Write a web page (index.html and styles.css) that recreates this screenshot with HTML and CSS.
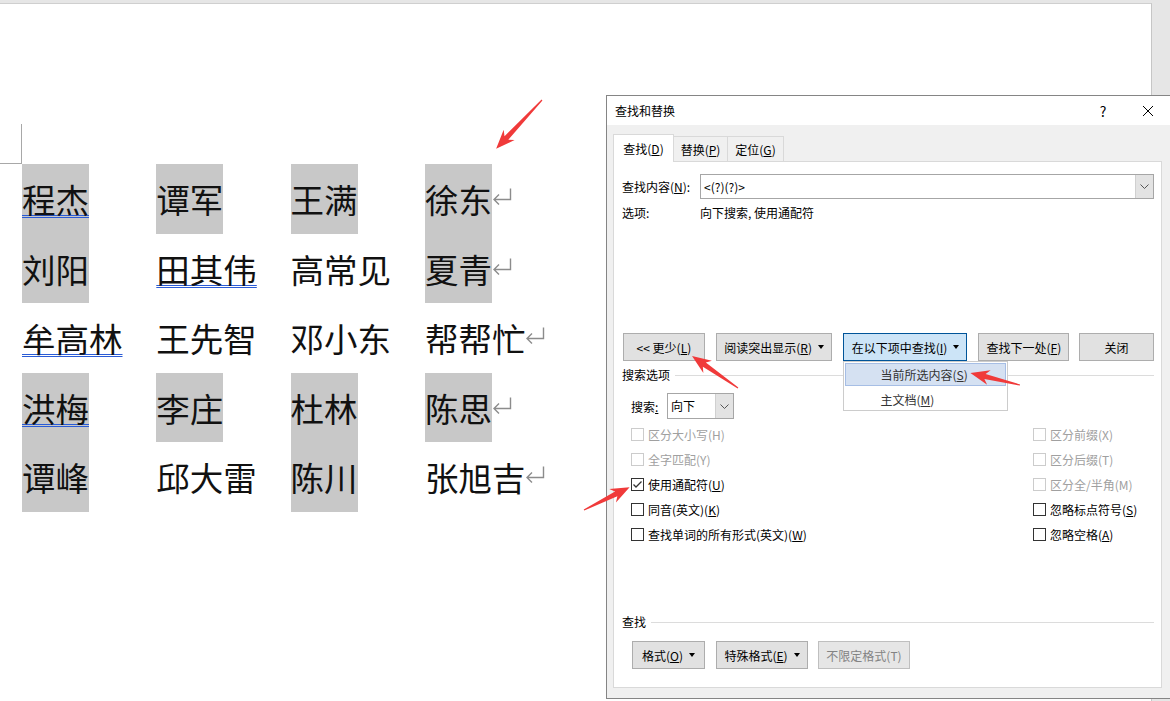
FILE: index.html
```html
<!DOCTYPE html>
<html>
<head>
  <meta charset="UTF-8">
  <title>查找和替换</title>
  <link rel="stylesheet" href="styles.css">
</head>
<body>
  <div class="page">
    <div class="corner"></div>
    <div class="names">
      <div class="row">
        <span class="cell"><span class="nm hl ul">程杰</span></span>
        <span class="cell"><span class="nm hl">谭军</span></span>
        <span class="cell"><span class="nm hl">王满</span></span>
        <span class="cell"><span class="nm hl">徐东</span><svg class="ret" viewBox="0 0 20 17"><path d="M18.5 0.5V11.5H2.5M7 6.5L2 11.5L7 16.5"/></svg></span>
      </div>
      <div class="row">
        <span class="cell"><span class="nm hl">刘阳</span></span>
        <span class="cell"><span class="nm ul">田其伟</span></span>
        <span class="cell"><span class="nm">高常见</span></span>
        <span class="cell"><span class="nm hl">夏青</span><svg class="ret" viewBox="0 0 20 17"><path d="M18.5 0.5V11.5H2.5M7 6.5L2 11.5L7 16.5"/></svg></span>
      </div>
      <div class="row">
        <span class="cell"><span class="nm ul">牟高林</span></span>
        <span class="cell"><span class="nm">王先智</span></span>
        <span class="cell"><span class="nm">邓小东</span></span>
        <span class="cell"><span class="nm">帮帮忙</span><svg class="ret" viewBox="0 0 20 17"><path d="M18.5 0.5V11.5H2.5M7 6.5L2 11.5L7 16.5"/></svg></span>
      </div>
      <div class="row">
        <span class="cell"><span class="nm hl ul">洪梅</span></span>
        <span class="cell"><span class="nm hl">李庄</span></span>
        <span class="cell"><span class="nm hl">杜林</span></span>
        <span class="cell"><span class="nm hl">陈思</span><svg class="ret" viewBox="0 0 20 17"><path d="M18.5 0.5V11.5H2.5M7 6.5L2 11.5L7 16.5"/></svg></span>
      </div>
      <div class="row">
        <span class="cell"><span class="nm hl">谭峰</span></span>
        <span class="cell"><span class="nm">邱大雷</span></span>
        <span class="cell"><span class="nm hl">陈川</span></span>
        <span class="cell"><span class="nm">张旭吉</span><svg class="ret" viewBox="0 0 20 17"><path d="M18.5 0.5V11.5H2.5M7 6.5L2 11.5L7 16.5"/></svg></span>
      </div>
    </div>
  </div>

  <!-- 查找和替换 对话框 -->
  <div class="dialog">
    <div class="titlebar">
      <span class="title">查找和替换</span>
      <span class="tb-help">?</span>
      <span class="tb-close"><svg width="10" height="10" viewBox="0 0 10 10"><path d="M0 0L10 10M10 0L0 10"/></svg></span>
    </div>
    <div class="dbody">
      <div class="tabs">
        <div class="tab active">查找(<u>D</u>)</div>
        <div class="tab t2">替换(<u>P</u>)</div>
        <div class="tab t3">定位(<u>G</u>)</div>
      </div>
      <div class="panel">
        <div class="find-row">
          <span class="lbl">查找内容(<u>N</u>):</span>
          <div class="combo">
            <span class="combo-text">&lt;(?)(?)&gt;</span>
            <span class="combo-btn"><svg width="9" height="5" viewBox="0 0 9 5"><path d="M0.5 0.5L4.5 4.5L8.5 0.5"/></svg></span>
          </div>
        </div>
        <div class="opts-row">
          <span class="lbl">选项:</span>
          <span>向下搜索, 使用通配符</span>
        </div>

        <div class="btn-row">
          <div class="btn w-less">&lt;&lt; 更少(<u>L</u>)</div>
          <div class="btn w-read">阅读突出显示(<u>R</u>)<i class="caret"></i></div>
          <div class="menu-wrap">
            <div class="btn w-in active-btn">在以下项中查找(<u>I</u>)<i class="caret"></i></div>
            <div class="menu">
              <div class="menu-item sel">当前所选内容(<u>S</u>)</div>
              <div class="menu-item">主文档(<u>M</u>)</div>
            </div>
          </div>
          <div class="btn w-next">查找下一处(<u>F</u>)</div>
          <div class="btn w-close">关闭</div>
        </div>

        <div class="group">搜索选项</div>
        <div class="dir-row">
          <span class="dir-lbl">搜索<u>:</u></span>
          <div class="select">
            <span class="combo-text">向下</span>
            <span class="combo-btn"><svg width="9" height="5" viewBox="0 0 9 5"><path d="M0.5 0.5L4.5 4.5L8.5 0.5"/></svg></span>
          </div>
        </div>

        <div class="checks">
          <div class="chk off"><span class="box"></span>区分大小写(H)</div>
          <div class="chk off"><span class="box"></span>区分前缀(X)</div>
          <div class="chk off"><span class="box"></span>全字匹配(Y)</div>
          <div class="chk off"><span class="box"></span>区分后缀(T)</div>
          <div class="chk"><span class="box"><svg width="11" height="11" viewBox="0 0 11 11"><path d="M1.5 5.5L4 8L9.5 2.5"/></svg></span>使用通配符(<u>U</u>)</div>
          <div class="chk off"><span class="box"></span>区分全/半角(M)</div>
          <div class="chk"><span class="box"></span>同音(英文)(<u>K</u>)</div>
          <div class="chk"><span class="box"></span>忽略标点符号(<u>S</u>)</div>
          <div class="chk"><span class="box"></span>查找单词的所有形式(英文)(<u>W</u>)</div>
          <div class="chk"><span class="box"></span>忽略空格(<u>A</u>)</div>
        </div>

        <div class="group bottom">查找</div>
        <div class="fmt-row">
          <div class="btn w-fmt">格式(<u>O</u>)<i class="caret"></i></div>
          <div class="btn w-spec">特殊格式(<u>E</u>)<i class="caret"></i></div>
          <div class="btn w-none disabled">不限定格式(T)</div>
        </div>
      </div>
    </div>
  </div>

  <!-- 标注箭头 -->
  <svg class="marks" width="1170" height="701" viewBox="0 0 1170 701">
    <g transform="translate(542 100) rotate(133.2)"><polygon points="0,-0.6 52,-2.6 48,-7.5 67,0 48,7.5 52,2.6 0,0.6"/></g>
    <g transform="translate(738 388) rotate(-145.2)"><polygon points="0,-0.6 41,-2.6 37,-7.5 56,0 37,7.5 41,2.6 0,0.6"/></g>
    <g transform="translate(1020 385) rotate(-166.5)"><polygon points="0,-0.6 36,-2.6 32,-7.5 51,0 32,7.5 36,2.6 0,0.6"/></g>
    <g transform="translate(584 510) rotate(-26.6)"><polygon points="0,-0.6 36,-2.6 32,-7.5 51,0 32,7.5 36,2.6 0,0.6"/></g>
  </svg>
</body>
</html>
```

FILE: styles.css
```css
* {
  box-sizing: border-box;
}
body {
  margin: 0;
  width: 1170px;
  height: 701px;
  overflow: hidden;
  position: relative;
  background-color: #e6e6e6;
  font-family: "Noto Sans CJK SC", "Noto Sans", sans-serif;
}

/* документ */
.page {
  width: 1152px;
  height: 698px;
  margin-top: 3px;
  background-color: #fff;
  border-top: 1px solid #cfcfcf;
  border-right: 1px solid #c6c6c6;
}
.corner {
  width: 22px;
  height: 40px;
  margin-top: 120px;
  border-right: 1px solid #a8a8a8;
  border-bottom: 1px solid #a8a8a8;
}
.names {
  padding-left: 22px;
  font-size: 33.5px;
  color: #111;
}
.row {
  display: flex;
  height: 69.6px;
}
.cell {
  display: flex;
  width: 134.3px;
  flex-shrink: 0;
}
.nm {
  display: block;
  height: 69.6px;
  line-height: 69.6px;
  white-space: nowrap;
}
.hl {
  background-color: #c8c8c8;
}
.ul {
  text-decoration: underline double #2a5bd6;
  text-decoration-thickness: 1px;
  text-underline-offset: 2px;
}
.ret {
  width: 20px;
  height: 17px;
  margin-top: 24px;
  flex-shrink: 0;
  fill: none;
  stroke: #8c8c8c;
  stroke-width: 1.4;
}

/* диалог */
.dialog {
  position: absolute;
  left: 606px;
  top: 95px;
  width: 566px;
  height: 604px;
  border: 1px solid #858585;
  background-color: #f0f0f0;
  font-size: 12px;
  color: #000;
}
.titlebar {
  display: flex;
  align-items: center;
  height: 29px;
  padding-left: 8px;
  background-color: #fff;
}
.title {
  flex: 1;
}
.tb-help {
  width: 44px;
  text-align: center;
  font-size: 14px;
}
.tb-close {
  width: 46px;
  display: flex;
  justify-content: center;
}
.tb-close svg {
  stroke: #000;
  stroke-width: 1;
}
.dbody {
  padding: 9px 0 0 6px;
}
.tabs {
  display: flex;
  align-items: flex-end;
  height: 27px;
}
.tab {
  display: flex;
  align-items: center;
  justify-content: center;
  height: 25px;
  margin-left: -1px;
  border: 1px solid #d9d9d9;
  border-bottom: none;
  background-color: #f0f0f0;
}
.tab.active {
  position: relative;
  z-index: 1;
  width: 61px;
  height: 28px;
  margin-left: 0;
  margin-bottom: -1px;
  background-color: #fff;
}
.tab.t2 {
  width: 55px;
}
.tab.t3 {
  width: 57px;
}
.panel {
  width: 549px;
  height: 527px;
  padding: 12px 7px 0 8px;
  border: 1px solid #d9d9d9;
  background-color: #fff;
}
.find-row {
  display: flex;
  align-items: center;
  height: 25px;
}
.lbl {
  width: 78px;
  flex-shrink: 0;
}
.combo {
  flex: 1;
  display: flex;
  height: 25px;
  border: 1px solid #a6a6a6;
}
.combo-text {
  flex: 1;
  padding-left: 3px;
  line-height: 23px;
}
.combo-btn {
  width: 18px;
  display: flex;
  align-items: center;
  justify-content: center;
  background-color: #e3e3e3;
  border-left: 1px solid #d0d0d0;
}
.combo-btn svg {
  fill: none;
  stroke: #555;
  stroke-width: 1;
}
.opts-row {
  display: flex;
  margin-top: 6px;
  line-height: 16px;
}
.btn-row {
  display: flex;
  margin-top: 112px;
  margin-left: 1px;
}
.btn {
  display: flex;
  align-items: center;
  justify-content: center;
  height: 28px;
  border: 1px solid #adadad;
  background-color: #e1e1e1;
  white-space: nowrap;
}
.caret {
  width: 0;
  height: 0;
  margin-left: 6px;
  border-left: 3.5px solid transparent;
  border-right: 3.5px solid transparent;
  border-top: 4px solid #000;
}
.w-less { width: 82px; }
.w-read { width: 117px; margin-left: 11px; }
.menu-wrap { position: relative; margin-left: 11px; }
.w-in { width: 124px; }
.w-next { width: 91px; margin-left: 11px; }
.w-close { width: 75px; margin-left: 10px; }
.active-btn {
  background-color: #cce4f7;
  border-color: #005499;
}
.menu {
  position: absolute;
  left: 0;
  top: 28px;
  z-index: 2;
  width: 165px;
  height: 50px;
  padding: 1px;
  border: 1px solid #cccccc;
  background-color: #fff;
  color: #333;
}
.menu-item {
  height: 23px;
  line-height: 21px;
  padding-left: 34px;
  border: 1px solid transparent;
}
.menu-item + .menu-item {
  margin-top: 1px;
  line-height: 24px;
}
.menu-item.sel {
  background-color: #d5e1f2;
  border-color: #a6bee5;
}
.group {
  display: flex;
  align-items: center;
  margin-top: 6px;
  line-height: 16px;
}
.group::after {
  content: "";
  flex: 1;
  height: 1px;
  margin-left: 5px;
  background-color: #dcdcdc;
}
.group.bottom {
  margin-top: 67px;
}
.dir-row {
  display: flex;
  align-items: center;
  height: 26px;
  margin-top: 10px;
  padding-left: 9px;
}
.dir-lbl {
  width: 36px;
}
.select {
  display: flex;
  width: 67px;
  height: 26px;
  border: 1px solid #a6a6a6;
}
.checks {
  display: grid;
  grid-template-columns: 402px 1fr;
  grid-auto-rows: 25px;
  margin-top: 3px;
  padding-left: 9px;
}
.chk {
  display: flex;
  align-items: center;
  white-space: nowrap;
}
.box {
  display: flex;
  align-items: center;
  justify-content: center;
  width: 13px;
  height: 13px;
  margin-right: 4px;
  border: 1px solid #333;
  background-color: #fff;
}
.box svg {
  fill: none;
  stroke: #333;
  stroke-width: 1.3;
}
.chk.off {
  color: #a0a0a0;
}
.chk.off .box {
  border-color: #cccccc;
}
.fmt-row {
  display: flex;
  margin-top: 11px;
  padding-left: 10px;
}
.w-fmt { width: 73px; }
.w-spec { width: 92px; margin-left: 11px; }
.w-none { width: 92px; margin-left: 10px; }
.btn.disabled {
  color: #838383;
  border-color: #bfbfbf;
  background-color: #e6e6e6;
}

/* стрелки */
.marks {
  position: absolute;
  left: 0;
  top: 0;
  z-index: 5;
  pointer-events: none;
  fill: #f03a3a;
}
```
